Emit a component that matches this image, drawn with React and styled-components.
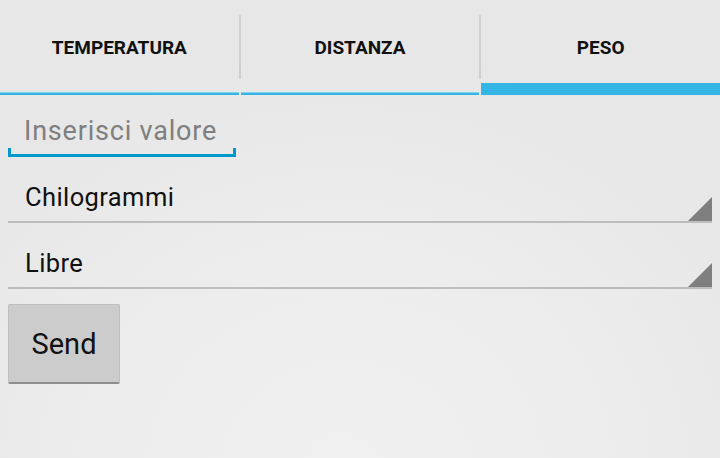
import React from "react";
import styled, { createGlobalStyle } from "styled-components";

const GlobalStyle = createGlobalStyle`
  html, body {
    margin: 0;
    padding: 0;
    height: 100%;
  }
  body {
    font-family: Roboto, "Noto Sans", "Liberation Sans", sans-serif;
    background: #e7e7e7;
  }
`;

const tabs = ["TEMPERATURA", "DISTANZA", "PESO"];

const App = () => {
  const selected = 2;
  return (
    <>
      <GlobalStyle />
      <Screen>
        <TabBar>
          {tabs.map((label, i) => (
            <React.Fragment key={label}>
              {i > 0 && (
                <Divider>
                  <DividerLine />
                </Divider>
              )}
              <Tab>
                <TabLabel>{label}</TabLabel>
                <Indicator selected={i === selected} />
              </Tab>
            </React.Fragment>
          ))}
        </TabBar>
        <Form>
          <Field>
            <Input placeholder="Inserisci valore" />
            <Bracket />
          </Field>
          <Spinner>
            <SpinnerText>Chilogrammi</SpinnerText>
            <Corner />
          </Spinner>
          <Spinner>
            <SpinnerText>Libre</SpinnerText>
            <Corner />
          </Spinner>
          <Button>Send</Button>
        </Form>
      </Screen>
    </>
  );
};

const Screen = styled.div`
  width: 720px;
  height: 458px;
  overflow: hidden;
  background: radial-gradient(
    ellipse 480px 420px at 345px 470px,
    #f0f0f0 0%,
    #eeeeee 40%,
    #e7e7e7 100%
  );
`;

const TabBar = styled.div`
  display: flex;
  height: 95px;
`;

const Tab = styled.div`
  flex: 1;
  display: grid;
  grid-template-rows: 95px;
`;

const TabLabel = styled.div`
  grid-area: 1 / 1;
  height: 92px;
  display: flex;
  align-items: center;
  justify-content: center;
  padding-top: 2px;
  box-sizing: border-box;
  font-size: 19px;
  font-weight: 700;
  color: #111111;
`;

const Indicator = styled.div`
  grid-area: 1 / 1;
  align-self: end;
  height: ${(props) => (props.selected ? "12px" : "3px")};
  background: #33b5e5;
  border-top: ${(props) => (props.selected ? "none" : "1px solid #8fd1ec")};
  box-sizing: border-box;
`;

const Divider = styled.div`
  width: 2px;
  padding-top: 15px;
`;

const DividerLine = styled.div`
  height: 64px;
  background: #d0d0d0;
`;

const Form = styled.div`
  display: flex;
  flex-direction: column;
  padding: 0 8px;
`;

const Field = styled.div`
  width: 228px;
  padding-top: 19px;
  display: flex;
  flex-direction: column;
`;

const Input = styled.input`
  border: none;
  outline: none;
  background: transparent;
  font-family: Roboto, "Noto Sans", sans-serif;
  font-size: 27px;
  letter-spacing: 0.8px;
  color: #222;
  padding: 0 0 0 16px;
  height: 34px;
  width: 100%;
  box-sizing: border-box;

  &::placeholder {
    color: #7f7f7f;
  }
`;

const Bracket = styled.div`
  height: 6px;
  border: 3px solid #0099cc;
  border-top: none;
`;

const Spinner = styled.div`
  position: relative;
  width: 704px;
  height: 66px;
  display: flex;
  align-items: flex-end;
  border-bottom: 2px solid #bdbdbd;
  box-sizing: border-box;
`;

const SpinnerText = styled.div`
  padding: 0 0 9px 17px;
  font-size: 25.5px;
  letter-spacing: 0.4px;
  color: #111111;
`;

const Corner = styled.div`
  position: absolute;
  right: 0;
  bottom: 0;
  width: 0;
  height: 0;
  border-style: solid;
  border-width: 0 0 24px 24px;
  border-color: transparent transparent #7f7f7f transparent;
`;

const Button = styled.button`
  margin-top: 15px;
  width: 112px;
  height: 80px;
  background: #cccccc;
  border: 1px solid #bfbfbf;
  border-bottom: 2px solid #8e8e8e;
  border-radius: 2px;
  font-family: Roboto, "Noto Sans", sans-serif;
  font-size: 29px;
  color: #111111;
  padding: 0;
`;

export default App;
